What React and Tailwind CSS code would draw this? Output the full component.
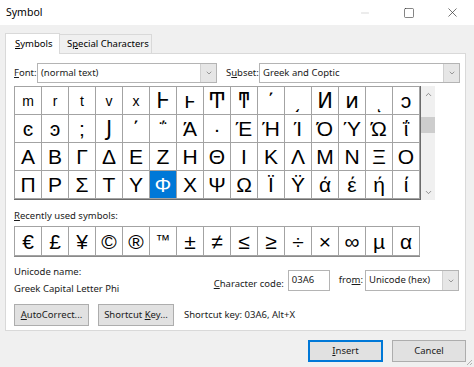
import { ChevronDown, ChevronUp, Minus, Square, X } from 'lucide-react'

const ui = { fontFamily: '"Noto Sans", "Open Sans", sans-serif' }
const sym = { fontFamily: '"Liberation Sans", "DejaVu Sans", sans-serif' }

const rows = [
    ['m', 'r', 't', 'v', 'x', 'Ͱ', 'ͱ', 'Ͳ', 'ͳ', '΄', '͵', 'Ͷ', 'ͷ', 'ͺ', 'ͻ'],
    ['ͼ', 'ͽ', ';', 'Ϳ', '΄', '΅', 'Ά', '·', 'Έ', 'Ή', 'Ί', 'Ό', 'Ύ', 'Ώ', 'ΐ'],
    ['Α', 'Β', 'Γ', 'Δ', 'Ε', 'Ζ', 'Η', 'Θ', 'Ι', 'Κ', 'Λ', 'Μ', 'Ν', 'Ξ', 'Ο'],
    ['Π', 'Ρ', 'Σ', 'Τ', 'Υ', 'Φ', 'Χ', 'Ψ', 'Ω', 'Ϊ', 'Ϋ', 'ά', 'έ', 'ή', 'ί'],
]

const recent = ['€', '£', '¥', '©', '®', '™', '±', '≠', '≤', '≥', '÷', '×', '∞', 'µ', 'α']

// keyboard accelerator letter
function U({ children }) {
    return <span className="underline underline-offset-1">{children}</span>
}

function Select({ value, className }) {
    return (
        <div className={`flex h-[20px] bg-white border border-[#b4b4b4] ${className}`}>
            <div className="flex-1 px-[3px] text-[9.5px] leading-[18px] text-[#1a1a1a] whitespace-nowrap">{value}</div>
            <div className="w-[16px] bg-[#e6e6e6] border-l border-[#d0d0d0] flex items-center justify-center">
                <ChevronDown size={8} strokeWidth={2} className="text-[#707070]" />
            </div>
        </div>
    )
}

function Button({ children, primary, className = '' }) {
    return (
        <div
            className={`h-[22px] flex items-center justify-center bg-[#e1e1e1] border text-[9.5px] text-[#1a1a1a] whitespace-nowrap ${
                primary ? 'border-[#0078d7] shadow-[inset_0_0_0_1px_#0078d7]' : 'border-[#adadad]'
            } ${className}`}
        >
            {children}
        </div>
    )
}

export default function App() {
    return (
        <div className="w-[474px] h-[367px] bg-[#f0f0f0] flex flex-col overflow-hidden relative" style={ui}>
            {/* Title bar */}
            <div className="h-[25px] bg-white flex items-center pl-[6px] shrink-0">
                <span className="text-[10.5px] text-black">Symbol</span>
                <div className="ml-auto flex items-center h-full">
                    <div className="w-[46px] flex justify-center"><Minus size={12} strokeWidth={1} className="text-[#b0b0b0]" /></div>
                    <div className="w-[42px] flex justify-center"><Square size={12} strokeWidth={1.2} className="text-[#333]" /></div>
                    <div className="w-[44px] flex justify-center"><X size={15} strokeWidth={1.1} className="text-[#333]" /></div>
                </div>
            </div>

            {/* Tabs */}
            <div className="flex items-end pl-[5px] pt-[7px] h-[28px] shrink-0">
                <div className="w-[55px] h-[21px] bg-white border border-b-0 border-[#d9d9d9] flex items-center pl-[9px] text-[9.5px] text-black relative z-10 -mb-px">
                    <span><U>S</U>ymbols</span>
                </div>
                <div className="w-[92px] h-[19px] border border-l-0 border-b-0 border-[#d9d9d9] bg-[#f0f0f0] flex items-center pl-[7px] text-[9.5px] text-black">
                    <span>S<U>p</U>ecial Characters</span>
                </div>
            </div>

            {/* Panel */}
            <div className="mx-[5px] mr-[8px] w-[461px] h-[278px] bg-white border border-[#d9d9d9] pl-[8px] pt-[9px] shrink-0">
                {/* Font / subset */}
                <div className="flex items-center h-[20px]">
                    <span className="text-[9.5px] w-[23px] text-[#1a1a1a]"><U>F</U>ont:</span>
                    <Select value="(normal text)" className="w-[180px]" />
                    <span className="text-[9.5px] ml-[9px] w-[33px] text-[#1a1a1a]">S<U>u</U>bset:</span>
                    <Select value="Greek and Coptic" className="w-[201px]" />
                </div>

                {/* Symbol grid + scrollbar */}
                <div className="flex mt-[3px]">
                    <div className="grid grid-cols-[repeat(15,26px)] gap-px bg-[#a3a3a3] p-px border-b border-r border-[#6b6b6b]" style={sym}>
                        {rows.map((row, ri) =>
                            row.map((c, ci) => {
                                const selected = ri === 3 && ci === 5
                                const small = ri === 0 && ci < 5
                                return (
                                    <div
                                        key={`${ri}-${ci}`}
                                        className={`h-[27px] flex items-center justify-center leading-none ${
                                            selected ? 'bg-[#0078d7] text-white' : 'bg-white text-black'
                                        } ${small ? 'text-[14px] text-[#333]' : 'text-[21px]'}`}
                                    >
                                        {c}
                                    </div>
                                )
                            })
                        )}
                    </div>
                    <div className="w-[14px] bg-[#f0f0f0] flex flex-col items-center">
                        <ChevronUp size={9} strokeWidth={2} className="text-[#707070] mt-[4px]" />
                        <div className="w-full h-[16px] bg-[#cdcdcd] mt-[18px]" />
                        <ChevronDown size={9} strokeWidth={2} className="text-[#707070] mt-auto mb-[3px]" />
                    </div>
                </div>

                {/* Recently used */}
                <div className="text-[9.5px] text-[#1a1a1a] mt-[8px] leading-[16px]"><U>R</U>ecently used symbols:</div>
                <div className="grid grid-cols-[repeat(15,26px)] gap-px bg-[#a3a3a3] p-px mt-[2px] w-fit border-b border-[#8a8a8a]" style={sym}>
                    {recent.map((c, i) => (
                        <div
                            key={i}
                            className={`h-[28px] bg-white flex justify-center text-black leading-none ${
                                c === '™' ? 'items-start pt-[5px] text-[15px]' : 'items-center text-[21px]'
                            }`}
                        >
                            {c}
                        </div>
                    ))}
                </div>

                {/* Unicode name / character code */}
                <div className="flex mt-[7px] h-[37px]">
                    <div className="flex flex-col text-[9.5px] text-[#1a1a1a] leading-[16px]">
                        <span>Unicode name:</span>
                        <span className="mt-[1px]">Greek Capital Letter Phi</span>
                    </div>
                    <div className="ml-auto flex items-start mt-[6px] mr-[6px]">
                        <span className="text-[9.5px] text-[#1a1a1a] mt-[7px]"><U>C</U>haracter code:</span>
                        <div className="w-[42px] h-[21px] ml-[4px] bg-white border border-[#b4b4b4] text-[9.5px] leading-[17px] px-[3px] text-[#1a1a1a]">03A6</div>
                        <span className="text-[9.5px] text-[#1a1a1a] ml-[9px] mt-[3px]">fro<U>m</U>:</span>
                        <Select value="Unicode (hex)" className="w-[94px] h-[21px] ml-[2px]" />
                    </div>
                </div>

                {/* Autocorrect / shortcut */}
                <div className="flex items-center mt-[3px]">
                    <Button className="w-[75px]"><span><U>A</U>utoCorrect...</span></Button>
                    <Button className="w-[76px] ml-[9px]"><span>Shortcut <U>K</U>ey...</span></Button>
                    <span className="text-[9.5px] text-[#1a1a1a] ml-[10px]">Shortcut key: 03A6, Alt+X</span>
                </div>
            </div>

            {/* Footer */}
            <div className="flex justify-end pr-[8px] mt-[9px]">
                <Button primary className="w-[75px]"><span><U>I</U>nsert</span></Button>
                <Button className="w-[74px] ml-[9px]">Cancel</Button>
            </div>

            {/* resize grip */}
            <svg className="absolute right-[1px] bottom-[1px]" width="8" height="8" viewBox="0 0 8 8">
                <path d="M7 2 L2 7 M7 5 L5 7" stroke="#b0b0b0" strokeWidth="1" />
            </svg>
        </div>
    )
}
